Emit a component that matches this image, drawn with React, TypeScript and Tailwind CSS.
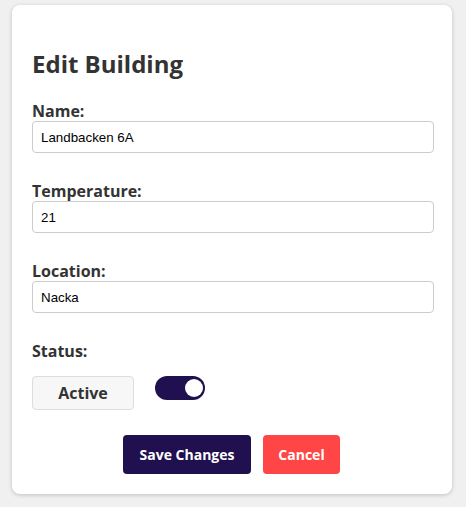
import React from "react";

function Field({ label, value }: { label: string; value: string }) {
  return (
    <div className="flex flex-col">
      <label className="block text-[16px] font-bold leading-[20px] text-[#333333]">{label}</label>
      <input
        readOnly
        value={value}
        className="h-[32px] w-full rounded-[4px] border border-[#cccccc] bg-white px-[8px] text-[13.33px] text-black outline-none"
        style={{ fontFamily: '"Liberation Sans", Arial, sans-serif' }}
      />
    </div>
  );
}

export default function App() {
  return (
    <div
      className="min-h-[507px] bg-[#f0f0f0] pl-[12px] pt-[5px]"
      style={{ fontFamily: '"Open Sans", "Noto Sans", sans-serif' }}
    >
      <div className="flex h-[489px] w-[440px] flex-col rounded-[8px] bg-white pl-[20px] pr-[18px] shadow-[0_1px_4px_rgba(0,0,0,0.2)]">
        <h2 className="mt-[43px] text-[24px] font-bold leading-[32px] text-[#333333]">Edit Building</h2>
        <div className="mt-[21px] flex flex-col gap-[28px]">
          <Field label="Name:" value="Landbacken 6A" />
          <Field label="Temperature:" value="21" />
          <Field label="Location:" value="Nacka" />
        </div>
        <div className="mt-[28px] text-[16px] font-bold leading-[20px] text-[#333333]">Status:</div>
        <div className="mt-[15px] flex items-start">
          <button className="h-[34px] w-[102px] rounded-[4px] border border-[#dddddd] bg-[#f7f7f7] text-[16px] font-bold text-[#333333]">
            Active
          </button>
          <div className="relative ml-[21px] h-[24px] w-[50px] rounded-full bg-[#20104f]">
            <div className="absolute right-[2px] top-[3px] h-[18px] w-[18px] rounded-full bg-white" />
          </div>
        </div>
        <div className="mt-[25px] flex justify-center gap-[12px] pr-[3px]">
          <button className="h-[39px] w-[128px] rounded-[4px] bg-[#20104f] text-[14px] font-bold text-white">
            Save Changes
          </button>
          <button className="h-[39px] w-[77px] rounded-[4px] bg-[#ff4545] text-[14px] font-bold text-white">
            Cancel
          </button>
        </div>
      </div>
    </div>
  );
}
